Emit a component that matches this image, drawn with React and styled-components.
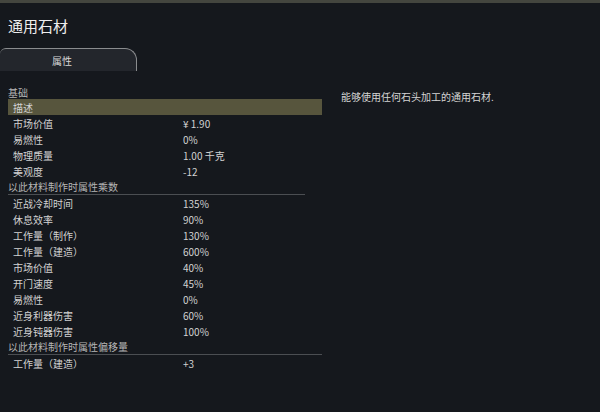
import React from "react";
import styled, { createGlobalStyle } from "styled-components";

const GlobalStyle = createGlobalStyle`
html, body {
    margin: 0;
    padding: 0;
    background: #15181d;
}
* { box-sizing: border-box; }
`

const Page = styled.div`
width: 600px;
height: 412px;
overflow: hidden;
background: #15181d;
color: #c9c9c9;
font-family: "Noto Sans CJK SC", "Noto Sans", sans-serif;
border-top: 3px solid #44463f;
display: flex;
flex-direction: column;
`

const Title = styled.h1`
margin: 0;
padding: 13px 0 0 8px;
height: 45px;
font-size: 15px;
font-weight: 400;
line-height: 20px;
color: #eeeeee;
`

const TabBar = styled.div`
display: flex;
height: 23px;
`

const Tab = styled.div`
width: 137px;
height: 23px;
display: flex;
align-items: center;
justify-content: center;
padding-right: 12px;
font-size: 10px;
color: #d8d8d8;
background: #23262c;
border: 1px solid #8a8c8e;
border-bottom: none;
border-left: none;
border-radius: 6px 12px 0 0;
`

const Body = styled.div`
display: flex;
padding: 14px 0 0 8px;
gap: 19px;
`

const Stats = styled.div`
width: 314px;
display: flex;
flex-direction: column;
`

const SectionTitle = styled.div`
font-size: 10px;
line-height: 15px;
height: ${({ $line }) => ($line ? "16px" : "14px")};
color: #b5b5b5;
width: ${({ $width }) => $width || "100%"};
border-bottom: ${({ $line }) => ($line ? "1px solid #4b4e52" : "none")};
`

const Row = styled.div`
display: grid;
grid-template-columns: 170px 1fr;
height: 16px;
align-items: center;
padding-left: 5px;
font-size: 10px;
color: #d2d2d2;
background: ${({ $active }) => ($active ? "#57553d" : "transparent")};
`

const Description = styled.p`
margin: 4px 0 0;
font-size: 10px;
color: #d4d4d4;
`

const sections = [
    {
        title: "基础",
        rows: [
            ["描述", "", true],
            ["市场价值", "¥ 1.90"],
            ["易燃性", "0%"],
            ["物理质量", "1.00 千克"],
            ["美观度", "-12"],
        ],
    },
    {
        title: "以此材料制作时属性乘数",
        line: true,
        width: "297px",
        rows: [
            ["近战冷却时间", "135%"],
            ["休息效率", "90%"],
            ["工作量（制作）", "130%"],
            ["工作量（建造）", "600%"],
            ["市场价值", "40%"],
            ["开门速度", "45%"],
            ["易燃性", "0%"],
            ["近身利器伤害", "60%"],
            ["近身钝器伤害", "100%"],
        ],
    },
    {
        title: "以此材料制作时属性偏移量",
        line: true,
        rows: [["工作量（建造）", "+3"]],
    },
];

const App = () => (
    <>
        <GlobalStyle />
        <Page>
            <Title>通用石材</Title>
            <TabBar>
                <Tab>属性</Tab>
            </TabBar>
            <Body>
                <Stats>
                    {sections.map(({ title, line, width, rows }) => (
                        <React.Fragment key={title}>
                            <SectionTitle $line={line} $width={width}>{title}</SectionTitle>
                            {rows.map(([label, value, active]) => (
                                <Row key={title + label} $active={active}>
                                    <span>{label}</span>
                                    <span>{value}</span>
                                </Row>
                            ))}
                        </React.Fragment>
                    ))}
                </Stats>
                <Description>能够使用任何石头加工的通用石材.</Description>
            </Body>
        </Page>
    </>
);

export default App;
